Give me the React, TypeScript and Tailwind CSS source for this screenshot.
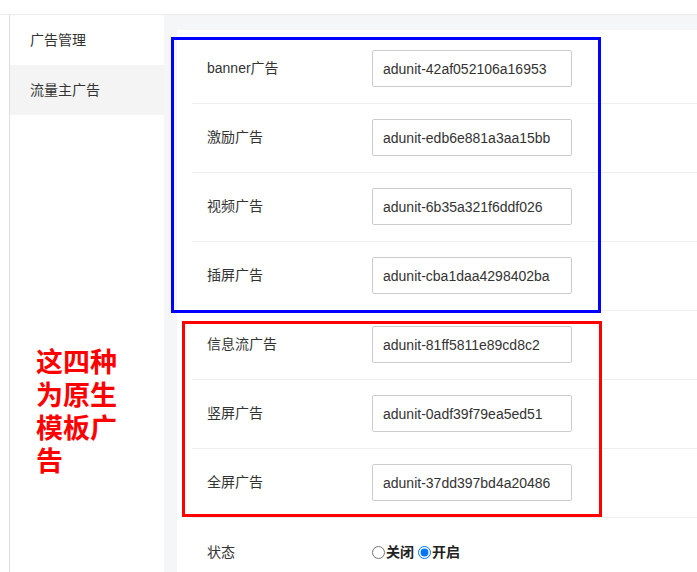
const font = { fontFamily: '"Liberation Sans", Arial, "Noto Sans CJK SC", sans-serif' };

const ads = [
  { label: "banner广告", value: "adunit-42af052106a16953" },
  { label: "激励广告", value: "adunit-edb6e881a3aa15bb" },
  { label: "视频广告", value: "adunit-6b35a321f6ddf026" },
  { label: "插屏广告", value: "adunit-cba1daa4298402ba" },
  { label: "信息流广告", value: "adunit-81ff5811e89cd8c2" },
  { label: "竖屏广告", value: "adunit-0adf39f79ea5ed51" },
  { label: "全屏广告", value: "adunit-37dd397bd4a20486" },
];

export default function App() {
  return (
    <div className="relative h-[572px] overflow-hidden bg-white text-[14px] text-[#333]" style={font}>
      {/* top bar */}
      <div className="h-[15px] border-b border-[#ececec] bg-white" />

      <div className="flex h-[557px]">
        <div className="w-[10px] border-r border-[#dedede] bg-white" />

        {/* side menu */}
        <aside className="w-[154px] bg-white">
          <div className="flex h-[50px] items-center pl-[20px]">广告管理</div>
          <div className="flex h-[50px] items-center bg-[#f4f4f4] pl-[20px]">流量主广告</div>
          <div className="mt-[232px] pl-[26px] text-[27px] font-bold leading-[33px] text-[#ff0000]">
            这四种
            <br />
            为原生
            <br />
            模板广
            <br />
            告
          </div>
        </aside>

        {/* content */}
        <main className="flex-1 bg-[#f5f6f8] pl-[13px] pt-[15px]">
          <div className="h-full bg-white pt-[5px]">
            {ads.map((ad) => (
              <div key={ad.label} className="ml-[15px] flex h-[69px] items-start border-b border-[#eeeeee] pt-[15px]">
                <div className="w-[180px] pl-[15px] leading-[37px]">{ad.label}</div>
                <input
                  readOnly
                  defaultValue={ad.value}
                  className="h-[37px] w-[200px] rounded-[2px] border border-[#cccccc] px-[10px] text-[14px] text-[#333] outline-none"
                />
              </div>
            ))}
            <div className="ml-[15px] flex h-[68px] items-center">
              <div className="w-[180px] pl-[15px]">状态</div>
              <label className="flex items-center font-bold text-[#222]">
                <input type="radio" name="status" className="m-0 h-[13px] w-[13px]" />
                <span className="ml-[1px]">关闭</span>
              </label>
              <label className="ml-[4px] flex items-center font-bold text-[#222]">
                <input type="radio" name="status" defaultChecked className="m-0 h-[13px] w-[13px]" />
                <span className="ml-[1px]">开启</span>
              </label>
            </div>
          </div>
        </main>
      </div>

      {/* annotation boxes */}
      <div className="pointer-events-none absolute left-[171px] top-[37px] h-[276px] w-[430px] border-[3px] border-[#0000ff]" />
      <div className="pointer-events-none absolute left-[182px] top-[321px] h-[196px] w-[420px] border-[3px] border-[#ff0000]" />
    </div>
  );
}
